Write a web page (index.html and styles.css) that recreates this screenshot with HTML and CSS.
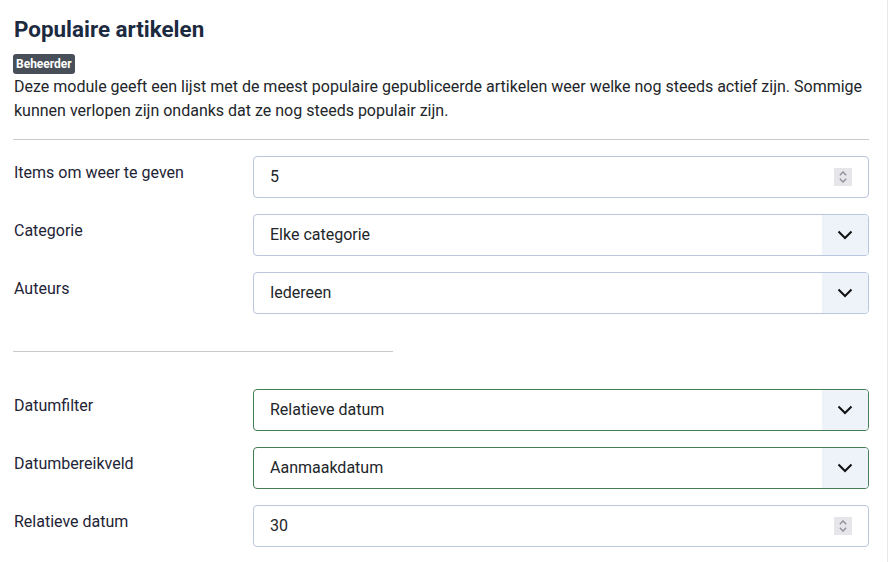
FILE: index.html
```html
<!DOCTYPE html>
<html lang="nl">
<head>
    <meta charset="UTF-8">
    <meta name="viewport" content="width=device-width, initial-scale=1.0">
    <title>Populaire artikelen</title>
    <link rel="stylesheet" href="styles.css">
</head>
<body>
    <div class="page">
        <h1>Populaire artikelen</h1>
        <span class="badge">Beheerder</span>
        <p class="description">Deze module geeft een lijst met de meest populaire gepubliceerde artikelen weer welke nog steeds actief zijn. Sommige kunnen verlopen zijn ondanks dat ze nog steeds populair zijn.</p>

        <hr class="divider">

        <div class="row">
            <label for="count">Items om weer te geven</label>
            <div class="field">
                <input type="number" id="count" value="5">
                <span class="spin">
                    <svg width="10" height="14" viewBox="0 0 10 14"><path d="M1.8 5.2 L5 2 L8.2 5.2 M1.8 8.8 L5 12 L8.2 8.8" fill="none" stroke="#8b8d98" stroke-width="1.3"/></svg>
                </span>
            </div>
        </div>

        <div class="row">
            <label for="catid">Categorie</label>
            <div class="field">
                <select id="catid"><option>Elke categorie</option></select>
                <span class="arrow">
                    <svg width="16" height="10" viewBox="0 0 16 10"><path d="M1.5 1.5 L8 8 L14.5 1.5" fill="none" stroke="#111" stroke-width="2"/></svg>
                </span>
            </div>
        </div>

        <div class="row">
            <label for="author">Auteurs</label>
            <div class="field">
                <select id="author"><option>Iedereen</option></select>
                <span class="arrow">
                    <svg width="16" height="10" viewBox="0 0 16 10"><path d="M1.5 1.5 L8 8 L14.5 1.5" fill="none" stroke="#111" stroke-width="2"/></svg>
                </span>
            </div>
        </div>

        <hr class="divider short">

        <div class="row">
            <label for="datefilter">Datumfilter</label>
            <div class="field changed">
                <select id="datefilter"><option>Relatieve datum</option></select>
                <span class="arrow">
                    <svg width="16" height="10" viewBox="0 0 16 10"><path d="M1.5 1.5 L8 8 L14.5 1.5" fill="none" stroke="#111" stroke-width="2"/></svg>
                </span>
            </div>
        </div>

        <div class="row">
            <label for="datefield">Datumbereikveld</label>
            <div class="field changed">
                <select id="datefield"><option>Aanmaakdatum</option></select>
                <span class="arrow">
                    <svg width="16" height="10" viewBox="0 0 16 10"><path d="M1.5 1.5 L8 8 L14.5 1.5" fill="none" stroke="#111" stroke-width="2"/></svg>
                </span>
            </div>
        </div>

        <div class="row">
            <label for="relative">Relatieve datum</label>
            <div class="field">
                <input type="number" id="relative" value="30">
                <span class="spin">
                    <svg width="10" height="14" viewBox="0 0 10 14"><path d="M1.8 5.2 L5 2 L8.2 5.2 M1.8 8.8 L5 12 L8.2 8.8" fill="none" stroke="#8b8d98" stroke-width="1.3"/></svg>
                </span>
            </div>
        </div>
    </div>
</body>
</html>
```

FILE: styles.css
```css
* {
    margin: 0;
    padding: 0;
    box-sizing: border-box;
}

body {
    font-family: Roboto, "Liberation Sans", sans-serif;
    font-size: 16px;
    line-height: 24px;
    color: #22262a;
    background: #fff;
}

.page {
    width: 888px;
    min-height: 562px;
    padding: 16px 18px 0 13px;
    border-right: 1px solid #e6e8ec;
}

h1 {
    font-size: 22.4px;
    font-weight: 700;
    line-height: 27px;
    color: #1c2a40;
    margin-bottom: 11px;
    padding-left: 1px;
}

.badge {
    display: block;
    width: fit-content;
    height: 20px;
    padding: 0 3px;
    background-color: #484f58;
    color: #fff;
    font-size: 12px;
    font-weight: 700;
    line-height: 20px;
    border-radius: 3px;
}

.description {
    margin-top: 1px;
    padding-left: 1px;
}

.divider {
    border: none;
    border-top: 1px solid #c9cacc;
    margin: 16px 0 16px;
}

.divider.short {
    width: 380px;
    margin: 37px 0 37px;
}

.row {
    display: grid;
    grid-template-columns: 240px 1fr;
    margin-bottom: 16px;
}

.row label {
    padding: 5px 0 0 1px;
    color: #1e2436;
}

.field {
    display: flex;
    height: 42px;
    border: 1px solid #b9c6dc;
    border-radius: 4px;
    overflow: hidden;
    background: #fff;
}

.field.changed {
    border-color: #457d54;
}

.field input,
.field select {
    flex: 1;
    min-width: 0;
    border: none;
    outline: none;
    background: transparent;
    font: inherit;
    color: #22262a;
    padding: 8px 16px;
    -webkit-appearance: none;
    appearance: none;
    -moz-appearance: textfield;
}

.field input::-webkit-inner-spin-button,
.field input::-webkit-outer-spin-button {
    -webkit-appearance: none;
    margin: 0;
}

.spin {
    width: 18px;
    height: 18px;
    margin: 11px 16px 0 0;
    background-color: #e6e6ea;
    display: flex;
    align-items: center;
    justify-content: center;
}

.arrow {
    width: 46px;
    background-color: #eef2f9;
    display: flex;
    align-items: center;
    justify-content: center;
}
```
